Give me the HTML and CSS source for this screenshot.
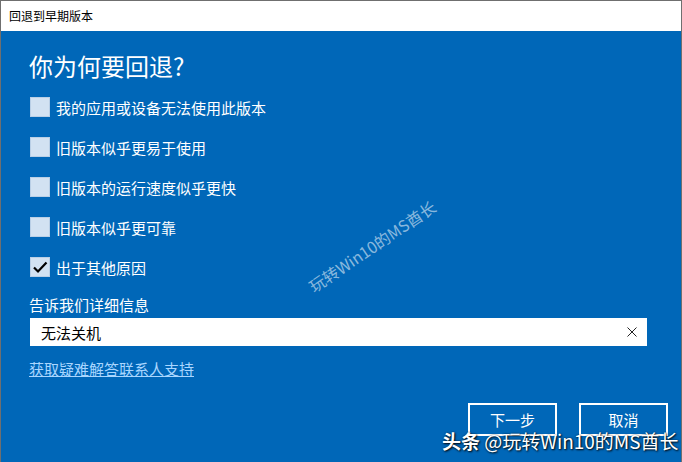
FILE: index.html
```html
<!DOCTYPE html>
<html lang="zh-CN">
<head>
  <meta charset="UTF-8">
  <title>回退到早期版本</title>
  <link rel="stylesheet" href="styles.css">
</head>
<body>

<div class="window">
  <div class="titlebar">回退到早期版本</div>

  <div class="content">
    <h1>你为何要回退?</h1>

    <ul class="reasons">
      <li><span class="box"></span>我的应用或设备无法使用此版本</li>
      <li><span class="box"></span>旧版本似乎更易于使用</li>
      <li><span class="box"></span>旧版本的运行速度似乎更快</li>
      <li><span class="box"></span>旧版本似乎更可靠</li>
      <li>
        <span class="box checked">
          <svg width="16" height="16" viewBox="0 0 16 16"><path d="M2 8.5 L6 12.5 L14.5 3.5" fill="none" stroke="#000" stroke-width="2.2"/></svg>
        </span>出于其他原因
      </li>
    </ul>

    <div class="field-label">告诉我们详细信息</div>
    <div class="field">
      <span class="field-text">无法关机</span>
      <svg class="clear" width="10" height="10" viewBox="0 0 10 10"><path d="M0.5 0.5 L9.5 9.5 M9.5 0.5 L0.5 9.5" stroke="#222" stroke-width="1"/></svg>
    </div>

    <a class="help" href="#">获取疑难解答联系人支持</a>

    <div class="actions">
      <button class="btn">下一步</button>
      <button class="btn">取消</button>
    </div>
  </div>

  <div class="stamp">玩转Win10的MS酋长</div>
  <div class="credit"><b>头条</b> @玩转Win10的MS酋长</div>
</div>

</body>
</html>
```

FILE: styles.css
```css
body {
  margin: 0;
  padding: 0;
  font-family: "Noto Sans CJK SC", "Noto Sans", sans-serif;
}
.window {
  position: relative;
  width: 682px;
  height: 462px;
  box-sizing: border-box;
  border: 1px solid #6f6f6f;
  border-bottom: none;
  background: #0067b8;
  overflow: hidden;
}
.titlebar {
  height: 30px;
  line-height: 29px;
  padding-left: 8px;
  background: #fff;
  color: #000;
  font-size: 12px;
}
.content {
  padding: 19px 34px 0 28px;
  color: #fff;
}
h1 {
  margin: 0;
  font-size: 24px;
  font-weight: normal;
  line-height: 32px;
}
.reasons {
  list-style: none;
  margin: 5px 0 0;
  padding: 0;
}
.reasons li {
  height: 40px;
  display: flex;
  align-items: center;
  font-size: 15px;
}
.box {
  width: 20px;
  height: 20px;
  box-sizing: border-box;
  margin: 0 6px 0 1px;
  background: #d2e2f2;
  border: 1px solid #b9cfe6;
  display: flex;
  align-items: center;
  justify-content: center;
}
.field-label {
  margin-top: 8px;
  font-size: 15px;
  line-height: 20px;
}
.field {
  margin: 3px 0 0 1px;
  height: 28px;
  background: #fff;
  display: flex;
  align-items: center;
  justify-content: space-between;
  padding: 0 10px 0 11px;
  color: #000;
  font-size: 15px;
}
.clear {
  display: block;
}
.help {
  display: inline-block;
  margin-top: 13px;
  font-size: 15px;
  line-height: 20px;
  color: #a9d6ff;
  text-decoration: underline;
}
.actions {
  display: flex;
  justify-content: flex-end;
  gap: 22px;
  margin: 23px -21px 0 0;
}
.btn {
  width: 89px;
  height: 33px;
  border: 2px solid #fff;
  background: transparent;
  color: #fff;
  font-family: inherit;
  font-size: 15px;
  padding: 0;
}
.stamp {
  position: absolute;
  left: 296px;
  top: 233px;
  width: 150px;
  text-align: center;
  font-size: 16px;
  color: rgba(255, 255, 255, 0.55);
  transform: rotate(-34deg);
  white-space: nowrap;
}
.credit {
  position: absolute;
  left: 441px;
  top: 426px;
  font-size: 19px;
  color: #fff;
  white-space: nowrap;
  text-shadow: 1px 1px 2px rgba(0, 0, 0, 0.9), 0 0 2px rgba(0, 0, 0, 0.6);
}
.credit b {
  font-weight: bold;
}
```
